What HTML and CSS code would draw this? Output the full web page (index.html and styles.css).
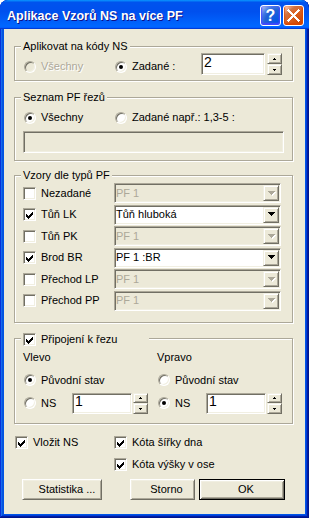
FILE: index.html
```html
<!DOCTYPE html>
<html lang="cs">
<head>
<meta charset="UTF-8">
<title>Aplikace Vzorů NS na více PF</title>
<link rel="stylesheet" href="styles.css">
</head>
<body>
<div class="window">
<div class="titlebar">
<span class="title">Aplikace Vzorů NS na více PF</span>
<span class="tb-btn help">?</span>
<span class="tb-btn close"><svg width="19" height="19" viewBox="0 0 19 19"><path d="M4.5 4.5L14.5 14.5M14.5 4.5L4.5 14.5" stroke="#fff" stroke-width="2.4" stroke-linecap="square"/></svg></span>
</div>
<div class="client">

<div class="group g-kody">
<div class="legend">Aplikovat na kódy NS</div>
<div class="row">
<div class="opt w91 disabled"><span class="radio"></span><span class="lbl">Všechny</span></div>
<div class="opt w87"><span class="radio on"></span><span class="lbl">Zadané :</span></div>
<div class="edit e-kody">2</div>
<div class="spin s-kody">
<span class="sbtn"><svg width="5" height="2" viewBox="0 0 5 2"><path d="M2 0h1v1h-1zM1 1h3v1h-3z"/></svg></span>
<span class="sbtn"><svg width="5" height="2" viewBox="0 0 5 2"><path d="M1 0h3v1h-3zM2 1h1v1h-1z"/></svg></span>
</div>
</div>
</div>

<div class="group g-seznam">
<div class="legend">Seznam PF řezů</div>
<div class="row radios">
<div class="opt w91"><span class="radio on"></span><span class="lbl">Všechny</span></div>
<div class="opt"><span class="radio"></span><span class="lbl">Zadané např.: 1,3-5 :</span></div>
</div>
<div class="edit off e-seznam"></div>
</div>

<div class="group g-vzory">
<div class="legend">Vzory dle typů PF</div>
<div class="plist">
<div class="prow">
<div class="opt w91"><span class="check"></span><span class="lbl">Nezadané</span></div>
<div class="combo off"><span class="ctext">PF 1</span><span class="cbtn"><svg width="8" height="5" viewBox="0 0 8 5"><path fill="#fff" d="M1 1h7v1h-7zM2 2h5v1h-5zM3 3h3v1h-3zM4 4h1v1h-1z"/><path fill="#aca899" d="M0 0h7v1h-7zM1 1h5v1h-5zM2 2h3v1h-3zM3 3h1v1h-1z"/></svg></span></div>
</div>
<div class="prow">
<div class="opt w91"><span class="check on"><svg width="11" height="11" viewBox="0 0 11 11"><path d="M8 3h1v1h-1zM7 4h2v1h-2zM2 5h1v1h-1zM6 5h3v1h-3zM2 6h2v1h-2zM5 6h3v1h-3zM2 7h5v1h-5zM3 8h3v1h-3zM4 9h1v1h-1z"/></svg></span><span class="lbl">Tůň LK</span></div>
<div class="combo"><span class="ctext">Tůň hluboká</span><span class="cbtn"><svg width="8" height="5" viewBox="0 0 8 5"><path d="M0 0h7v1h-7zM1 1h5v1h-5zM2 2h3v1h-3zM3 3h1v1h-1z"/></svg></span></div>
</div>
<div class="prow">
<div class="opt w91"><span class="check"></span><span class="lbl">Tůň PK</span></div>
<div class="combo off"><span class="ctext">PF 1</span><span class="cbtn"><svg width="8" height="5" viewBox="0 0 8 5"><path fill="#fff" d="M1 1h7v1h-7zM2 2h5v1h-5zM3 3h3v1h-3zM4 4h1v1h-1z"/><path fill="#aca899" d="M0 0h7v1h-7zM1 1h5v1h-5zM2 2h3v1h-3zM3 3h1v1h-1z"/></svg></span></div>
</div>
<div class="prow">
<div class="opt w91"><span class="check on"><svg width="11" height="11" viewBox="0 0 11 11"><path d="M8 3h1v1h-1zM7 4h2v1h-2zM2 5h1v1h-1zM6 5h3v1h-3zM2 6h2v1h-2zM5 6h3v1h-3zM2 7h5v1h-5zM3 8h3v1h-3zM4 9h1v1h-1z"/></svg></span><span class="lbl">Brod BR</span></div>
<div class="combo"><span class="ctext">PF 1 :BR</span><span class="cbtn"><svg width="8" height="5" viewBox="0 0 8 5"><path d="M0 0h7v1h-7zM1 1h5v1h-5zM2 2h3v1h-3zM3 3h1v1h-1z"/></svg></span></div>
</div>
<div class="prow">
<div class="opt w91"><span class="check"></span><span class="lbl">Přechod LP</span></div>
<div class="combo off"><span class="ctext">PF 1</span><span class="cbtn"><svg width="8" height="5" viewBox="0 0 8 5"><path fill="#fff" d="M1 1h7v1h-7zM2 2h5v1h-5zM3 3h3v1h-3zM4 4h1v1h-1z"/><path fill="#aca899" d="M0 0h7v1h-7zM1 1h5v1h-5zM2 2h3v1h-3zM3 3h1v1h-1z"/></svg></span></div>
</div>
<div class="prow">
<div class="opt w91"><span class="check"></span><span class="lbl">Přechod PP</span></div>
<div class="combo off"><span class="ctext">PF 1</span><span class="cbtn"><svg width="8" height="5" viewBox="0 0 8 5"><path fill="#fff" d="M1 1h7v1h-7zM2 2h5v1h-5zM3 3h3v1h-3zM4 4h1v1h-1z"/><path fill="#aca899" d="M0 0h7v1h-7zM1 1h5v1h-5zM2 2h3v1h-3zM3 3h1v1h-1z"/></svg></span></div>
</div>
</div>
</div>

<div class="group g-pripojeni">
<div class="legend legend-check"><span class="check on"><svg width="11" height="11" viewBox="0 0 11 11"><path d="M8 3h1v1h-1zM7 4h2v1h-2zM2 5h1v1h-1zM6 5h3v1h-3zM2 6h2v1h-2zM5 6h3v1h-3zM2 7h5v1h-5zM3 8h3v1h-3zM4 9h1v1h-1z"/></svg></span><span class="lbl">Připojení k řezu</span></div>
<div class="cols">
<div class="col col-left">
<div class="head">Vlevo</div>
<div class="opt orow"><span class="radio on"></span><span class="lbl">Původní stav</span></div>
<div class="nsrow">
<div class="opt w49"><span class="radio"></span><span class="lbl">NS</span></div>
<div class="edit e-ns">1</div>
<div class="spin s-ns">
<span class="sbtn"><svg width="5" height="2" viewBox="0 0 5 2"><path d="M2 0h1v1h-1zM1 1h3v1h-3z"/></svg></span>
<span class="sbtn"><svg width="5" height="2" viewBox="0 0 5 2"><path d="M1 0h3v1h-3zM2 1h1v1h-1z"/></svg></span>
</div>
</div>
</div>
<div class="col">
<div class="head">Vpravo</div>
<div class="opt orow"><span class="radio"></span><span class="lbl">Původní stav</span></div>
<div class="nsrow">
<div class="opt w49"><span class="radio on"></span><span class="lbl">NS</span></div>
<div class="edit e-ns">1</div>
<div class="spin s-ns">
<span class="sbtn"><svg width="5" height="2" viewBox="0 0 5 2"><path d="M2 0h1v1h-1zM1 1h3v1h-3z"/></svg></span>
<span class="sbtn"><svg width="5" height="2" viewBox="0 0 5 2"><path d="M1 0h3v1h-3zM2 1h1v1h-1z"/></svg></span>
</div>
</div>
</div>
</div>
</div>

<div class="bottom-checks">
<div class="bc-left">
<div class="opt"><span class="check on"><svg width="11" height="11" viewBox="0 0 11 11"><path d="M8 3h1v1h-1zM7 4h2v1h-2zM2 5h1v1h-1zM6 5h3v1h-3zM2 6h2v1h-2zM5 6h3v1h-3zM2 7h5v1h-5zM3 8h3v1h-3zM4 9h1v1h-1z"/></svg></span><span class="lbl">Vložit NS</span></div>
</div>
<div class="bc-right">
<div class="opt"><span class="check on"><svg width="11" height="11" viewBox="0 0 11 11"><path d="M8 3h1v1h-1zM7 4h2v1h-2zM2 5h1v1h-1zM6 5h3v1h-3zM2 6h2v1h-2zM5 6h3v1h-3zM2 7h5v1h-5zM3 8h3v1h-3zM4 9h1v1h-1z"/></svg></span><span class="lbl">Kóta šířky dna</span></div>
<div class="opt"><span class="check on"><svg width="11" height="11" viewBox="0 0 11 11"><path d="M8 3h1v1h-1zM7 4h2v1h-2zM2 5h1v1h-1zM6 5h3v1h-3zM2 6h2v1h-2zM5 6h3v1h-3zM2 7h5v1h-5zM3 8h3v1h-3zM4 9h1v1h-1z"/></svg></span><span class="lbl">Kóta výšky v ose</span></div>
</div>
</div>

<div class="buttons">
<div class="btn b-stat">Statistika ...</div>
<div class="btn b-storno">Storno</div>
<div class="btn default b-ok">OK</div>
</div>

</div>
</div>
</body>
</html>
```

FILE: styles.css
```css
body {
margin: 0;
background: #fff;
font-family: "Liberation Sans", Arial, sans-serif;
font-size: 11px;
line-height: 13px;
color: #000;
}
.window {
width: 309px;
height: 518px;
display: flex;
flex-direction: column;
background: #0055e5;
border-radius: 8px 8px 0 0;
box-shadow: inset -1px -1px #00138c, inset 1px 1px #0831d9, inset -2px -2px #001ea0, inset 2px 2px #166aee, inset -3px -3px #003bda, inset 3px 3px #0855dd;
overflow: hidden;
}
.titlebar {
flex: none;
height: 29px;
box-sizing: border-box;
display: flex;
align-items: flex-start;
padding: 5px 5px 0 7px;
background: linear-gradient(180deg, #0997ff, #0053ee 8%, #0050ee 40%, #06f 88%, #06f 93%, #005bff 95%, #003dd7 96%, #003dd7);
border-radius: 8px 8px 0 0;
}
.title {
flex: 1;
margin-top: 4px;
color: #fff;
font-weight: bold;
font-size: 12.5px;
line-height: 14px;
text-shadow: 1px 1px #0f1089;
white-space: nowrap;
}
.tb-btn {
width: 21px;
height: 21px;
box-sizing: border-box;
border: 1px solid #fff;
border-radius: 3px;
display: flex;
align-items: center;
justify-content: center;
margin-left: 2px;
}
.help {
background: radial-gradient(circle at 90% 90%, #0054e9 0%, #2263d5 55%, #4479e4 70%, #a3bbec 90%, #fff 100%);
box-shadow: inset 0 -1px 2px 1px #4646ff;
color: #fff;
font-weight: bold;
font-size: 16px;
line-height: 19px;
}
.close {
background: radial-gradient(circle at 90% 90%, #cc4600 0%, #dc6527 55%, #cd7546 70%, #ffccb2 90%, #fff 100%);
box-shadow: inset 0 -1px 2px 1px #da4600;
}
.close svg {
display: block;
}
.client {
flex: 1;
margin: 0 4px 4px;
background: #ece9d8;
padding: 17px 0 0 10px;
}

/* group boxes */
.group {
width: 279px;
box-sizing: border-box;
border: 1px solid #aca899;
box-shadow: inset 1px 1px #fff, 1px 1px #fff;
padding: 0 0 0 8px;
}
.legend {
width: fit-content;
margin: -7px 0 0 -2px;
padding: 0 2px;
background: #ece9d8;
white-space: nowrap;
}
.g-kody {
padding-bottom: 5px;
}
.g-seznam {
margin-top: 16px;
padding-bottom: 7px;
}
.g-vzory {
margin-top: 14px;
padding-bottom: 11px;
}
.g-pripojeni {
margin-top: 15px;
padding-bottom: 9px;
}
.legend-check {
width: 128px;
box-sizing: border-box;
margin-top: -6px;
display: flex;
align-items: center;
gap: 5px;
}
.row {
display: flex;
align-items: flex-start;
}
.row .opt {
margin-top: 7px;
}
.radios .opt {
margin-top: 0;
}
.radios {
margin-top: 7px;
}

/* options */
.opt {
display: flex;
align-items: center;
gap: 5px;
height: 13px;
white-space: nowrap;
}
.w91 { width: 91px; flex: none; }
.w87 { width: 87px; flex: none; }
.w49 { width: 49px; flex: none; }
.opt.disabled .lbl {
color: #aca899;
text-shadow: 1px 1px #fff;
}
.radio {
flex: none;
width: 12px;
height: 12px;
margin-left: 1px;
box-sizing: border-box;
border-radius: 50%;
border: 1px solid;
border-color: #aca899 #fff #fff #aca899;
box-shadow: inset 1px 1px #716f64, inset -1px -1px #f1efe2;
background: #fff;
display: flex;
align-items: center;
justify-content: center;
}
.radio.on::after {
content: "";
width: 4px;
height: 4px;
border-radius: 50%;
background: #000;
}
.opt.disabled .radio {
background: #ece9d8;
}
.check {
flex: none;
width: 13px;
height: 13px;
box-sizing: border-box;
border: 1px solid;
border-color: #aca899 #fff #fff #aca899;
box-shadow: inset 1px 1px #716f64, inset -1px -1px #f1efe2;
background: #fff;
}
.check svg {
display: block;
shape-rendering: crispEdges;
}

/* edits, spins, combos */
.edit {
flex: none;
box-sizing: border-box;
border: 1px solid;
border-color: #aca899 #fff #fff #aca899;
box-shadow: inset 1px 1px #716f64, inset -1px -1px #f1efe2;
background: #fff;
padding: 1px 2px;
font-size: 14px;
line-height: 15px;
}
.edit.off {
background: #ece9d8;
}
.e-kody {
width: 64px;
height: 22px;
}
.e-seznam {
width: 261px;
height: 22px;
margin-top: 7px;
}
.e-ns {
width: 60px;
height: 21px;
padding-top: 0;
}
.spin {
flex: none;
width: 15px;
display: flex;
flex-direction: column;
}
.s-kody {
height: 22px;
margin-left: 2px;
}
.s-ns {
height: 21px;
margin-left: 1px;
}
.sbtn, .cbtn {
box-sizing: border-box;
border: 1px solid;
border-color: #f1efe2 #716f64 #716f64 #f1efe2;
box-shadow: inset 1px 1px #fff, inset -1px -1px #aca899;
background: #ece9d8;
display: flex;
align-items: center;
justify-content: center;
}
.sbtn {
flex: 1;
}
svg {
shape-rendering: crispEdges;
}
.plist {
margin-top: 1px;
display: flex;
flex-direction: column;
gap: 1.6px;
}
.prow {
display: flex;
align-items: center;
height: 20px;
}
.combo {
width: 167px;
height: 20px;
box-sizing: border-box;
border: 1px solid;
border-color: #aca899 #fff #fff #aca899;
box-shadow: inset 1px 1px #716f64, inset -1px -1px #f1efe2;
background: #fff;
display: flex;
align-items: center;
}
.combo.off {
background: #ece9d8;
color: #aca899;
}
.ctext {
flex: 1;
padding-left: 1px;
white-space: nowrap;
}
.cbtn {
width: 16px;
height: 16px;
margin-right: 1px;
padding-left: 1px;
}

/* connection columns */
.cols {
display: flex;
margin-top: 5px;
}
.col-left {
width: 134px;
flex: none;
}
.orow {
margin-top: 10px;
}
.nsrow {
display: flex;
align-items: center;
margin-top: 6px;
height: 21px;
}

/* bottom */
.bottom-checks {
display: flex;
margin: 12px 0 0 1px;
}
.bc-left {
width: 99px;
}
.bc-right {
display: flex;
flex-direction: column;
gap: 9px;
}
.buttons {
display: flex;
margin-top: 8px;
padding-left: 8px;
}
.btn {
box-sizing: border-box;
height: 21px;
border: 1px solid;
border-color: #fff #716f64 #716f64 #fff;
box-shadow: inset 1px 1px #f1efe2, inset -1px -1px #aca899;
background: #ece9d8;
display: flex;
align-items: center;
justify-content: center;
padding-left: 8px;
}
.btn.default {
border-color: #000;
box-shadow: inset 1px 1px #fff, inset -1px -1px #716f64, inset 2px 2px #f1efe2, inset -2px -2px #aca899;
}
.b-stat {
width: 80px;
padding-left: 10px;
}
.b-storno {
width: 65px;
margin-left: 28px;
}
.b-ok {
width: 86px;
margin-left: 4px;
}
```
